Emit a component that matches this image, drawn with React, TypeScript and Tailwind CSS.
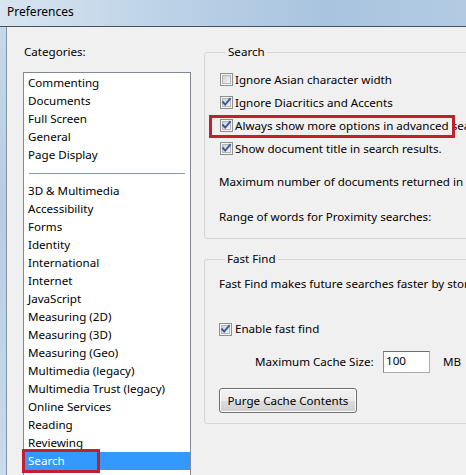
import React from "react";

const font = { fontFamily: '"Segoe UI", "Noto Sans", "Open Sans", sans-serif' };

function Check({ checked }: { checked: boolean }) {
  return (
    <svg width="13" height="13" viewBox="0 0 13 13" className="shrink-0">
      <defs>
        <linearGradient id={checked ? "cbg1" : "cbg0"} x1="0" y1="0" x2="1" y2="1">
          <stop offset="0" stopColor="#cbcfd5" />
          <stop offset="1" stopColor="#f7f7f7" />
        </linearGradient>
      </defs>
      <rect x="0.5" y="0.5" width="12" height="12" fill="#f4f4f4" stroke="#8e8f8f" />
      <rect x="2.5" y="2.5" width="8" height="8" fill={`url(#${checked ? "cbg1" : "cbg0"})`} stroke="#b3b7bd" />
      {checked && (
        <path d="M3 6.2 L5.2 8.6 L10 2.8" fill="none" stroke="#3b5a9c" strokeWidth="1.9" strokeLinecap="square" />
      )}
    </svg>
  );
}

const topItems = ["Commenting", "Documents", "Full Screen", "General", "Page Display"];
const bottomItems = [
  "3D & Multimedia",
  "Accessibility",
  "Forms",
  "Identity",
  "International",
  "Internet",
  "JavaScript",
  "Measuring (2D)",
  "Measuring (3D)",
  "Measuring (Geo)",
  "Multimedia (legacy)",
  "Multimedia Trust (legacy)",
  "Online Services",
  "Reading",
  "Reviewing",
  "Search",
];

export default function App() {
  return (
    <div
      className="w-[466px] h-[475px] overflow-hidden flex flex-col text-[11.6px] text-black relative"
      style={font}
    >
      <div className="h-[27px] shrink-0 flex items-center pl-[7px] pb-[3px] border-b border-[#46525e] bg-[linear-gradient(to_right,#d9e5f0_0%,#bcd2e7_35%,#a9c4df_70%,#b2cbe3_100%)]">
        <span className="text-[12px] leading-[16px] text-black">Preferences</span>
      </div>
      <div className="flex-1 flex min-h-0">
        <div className="w-[7px] shrink-0 bg-[linear-gradient(to_bottom,#c6d8ea,#b5cde4_40%,#c9dbec)] border-r border-[#8593a0]" />
        <div className="flex-1 bg-[#f0f0f0] flex min-w-0 overflow-hidden">
          {/* left column */}
          <div className="w-[184px] shrink-0 pl-[16px] pt-[17px] flex flex-col">
            <div className="h-[16px] leading-[16px] pl-[1px]">Categories:</div>
            <div className="mt-[12px] w-[168px] flex-1 bg-white border border-[#828790] border-b-0 pt-[1px]">
              {topItems.map((t) => (
                <div key={t} className="h-[18px] leading-[18px] pl-[4px]">
                  {t}
                </div>
              ))}
              <div className="h-[18px] flex items-center px-[5px]">
                <div className="h-[1px] w-full bg-[#7f9db9]" />
              </div>
              {bottomItems.map((t) => (
                <div
                  key={t}
                  className={
                    t === "Search"
                      ? "h-[18px] leading-[18px] pl-[4px] bg-[#3399ff] text-white relative"
                      : "h-[18px] leading-[18px] pl-[4px]"
                  }
                >
                  {t}
                  {t === "Search" && (
                    <span className="absolute left-[-2px] top-[-3px] w-[78px] h-[24px] border-[3px] border-[#c2202e]" />
                  )}
                </div>
              ))}
            </div>
          </div>
          {/* right column */}
          <div className="w-[300px] shrink-0 ml-[13px] pt-[17px] flex flex-col">
            <fieldset className="border border-[#d5d5d5] rounded-[3px] pl-[15px] pb-[13px]">
              <legend className="ml-[6px] px-[2px] h-[16px] leading-[16px]">Search</legend>
              <div className="pt-[8px] flex flex-col">
                <div className="h-[23px] flex items-center gap-[2px] whitespace-nowrap">
                  <Check checked={false} />
                  <span>Ignore Asian character width</span>
                </div>
                <div className="h-[23px] flex items-center gap-[2px] whitespace-nowrap">
                  <Check checked />
                  <span>Ignore Diacritics and Accents</span>
                </div>
                <div className="h-[23px] flex items-center gap-[2px] whitespace-nowrap relative">
                  <Check checked />
                  <span>Always show more options in advanced search</span>
                  <span className="absolute left-[-11px] top-[1px] w-[246px] h-[23px] border-[3px] border-[#c2202e]" />
                </div>
                <div className="h-[23px] flex items-center gap-[2px] whitespace-nowrap">
                  <Check checked />
                  <span>Show document title in search results.</span>
                </div>
              </div>
              <div className="mt-[14px] h-[16px] leading-[16px] whitespace-nowrap -ml-[1px]">
                Maximum number of documents returned in Results
              </div>
              <div className="mt-[19px] h-[16px] leading-[16px] whitespace-nowrap -ml-[1px]">
                Range of words for Proximity searches:
              </div>
            </fieldset>
            <fieldset className="mt-[12px] border border-[#d5d5d5] rounded-[3px] pl-[14px] pb-[10px]">
              <legend className="ml-[6px] px-[2px] h-[16px] leading-[16px]">Fast Find</legend>
              <div className="mt-[9px] h-[16px] leading-[16px] whitespace-nowrap">
                Fast Find makes future searches faster by storing information
              </div>
              <div className="mt-[29px] h-[16px] flex items-center gap-[3px] whitespace-nowrap">
                <Check checked />
                <span>Enable fast find</span>
              </div>
              <div className="mt-[14px] h-[22px] flex items-center whitespace-nowrap">
                <span className="ml-[36px] w-[128px]">Maximum Cache Size:</span>
                <div className="w-[47px] h-[22px] bg-white border border-[#abadb3] border-t-[#6f6f6f] border-l-[#8a8a8a] pl-[2px] leading-[18px]">
                  100
                </div>
                <span className="ml-[13px]">MB</span>
              </div>
              <button
                className="mt-[15px] w-[138px] h-[25px] rounded-[3px] border border-[#707070] bg-[linear-gradient(to_bottom,#f2f2f2_0%,#ebebeb_50%,#dddddd_51%,#cfcfcf_100%)] text-[11.6px] text-black shadow-[inset_0_0_0_1px_#fcfcfc]"
                style={font}
              >
                Purge Cache Contents
              </button>
            </fieldset>
          </div>
        </div>
      </div>
    </div>
  );
}
